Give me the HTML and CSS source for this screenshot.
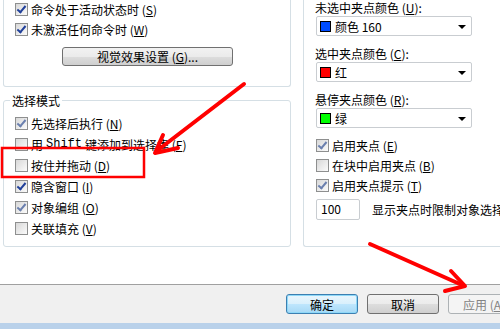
FILE: index.html
```html
<!DOCTYPE html>
<html lang="zh-CN">

<head>
    <meta charset="UTF-8">
    <meta name="viewport" content="width=device-width, initial-scale=1.0">
    <title>选项 - 选择集</title>
    <link rel="stylesheet" href="styles.css">
</head>

<body>
    <div class="dialog">
        <div class="main">
            <div class="left">
                <div class="group top">
                    <div class="check on"><span class="box"></span>命令处于活动状态时 (<u>S</u>)</div>
                    <div class="check on"><span class="box"></span>未激活任何命令时 (<u>W</u>)</div>
                    <button class="btn visual">视觉效果设置 (<u>G</u>)...</button>
                </div>

                <fieldset class="group mode">
                    <legend>选择模式</legend>
                    <div class="rows">
                        <div class="check on dim"><span class="box"></span>先选择后执行 (<u>N</u>)</div>
                        <div class="check"><span class="box"></span>用 <span class="mono">Shift</span> 键添加到选择集 (<u>F</u>)</div>
                        <div class="check"><span class="box"></span>按住并拖动 (<u>D</u>)</div>
                        <div class="check on"><span class="box"></span>隐含窗口 (<u>I</u>)</div>
                        <div class="check on dim"><span class="box"></span>对象编组 (<u>O</u>)</div>
                        <div class="check"><span class="box"></span>关联填充 (<u>V</u>)</div>
                    </div>
                </fieldset>
            </div>

            <div class="right">
                <div class="group grips">
                    <div class="label">未选中夹点颜色 (<u>U</u>):</div>
                    <div class="select"><span class="swatch blue"></span>颜色 160<span class="caret"></span></div>

                    <div class="label">选中夹点颜色 (<u>C</u>):</div>
                    <div class="select"><span class="swatch red"></span>红<span class="caret"></span></div>

                    <div class="label">悬停夹点颜色 (<u>R</u>):</div>
                    <div class="select"><span class="swatch green"></span>绿<span class="caret"></span></div>

                    <div class="check on dim first"><span class="box"></span>启用夹点 (<u>E</u>)</div>
                    <div class="check"><span class="box"></span>在块中启用夹点 (<u>B</u>)</div>
                    <div class="check on dim"><span class="box"></span>启用夹点提示 (<u>T</u>)</div>

                    <div class="limit">
                        <div class="num">100</div>
                        <span>显示夹点时限制对象选择</span>
                    </div>
                </div>
            </div>
        </div>

        <div class="footer">
            <button class="btn ok">确定</button>
            <button class="btn">取消</button>
            <button class="btn" disabled>应用 (<u>A</u>)</button>
        </div>
        <div class="band"></div>

        <!-- 红色标注 -->
        <svg class="marks" width="500" height="329" viewBox="0 0 500 329">
            <rect x="2" y="148" width="142" height="29" fill="none" stroke="#f00" stroke-width="2.5" />
            <g fill="none" stroke="#f00" stroke-width="4" stroke-linecap="round" stroke-linejoin="round">
                <path d="M244 84 L158 150" />
                <path d="M163 135 L155 153 L178 148" />
                <path d="M370 244 L462 285" />
                <path d="M451 271 L465 286 L445 291" />
            </g>
        </svg>
    </div>
</body>

</html>
```

FILE: styles.css
```css
body {
    margin: 0;
    background-color: #fff;
    color: #000;
    font-family: "Noto Sans CJK SC", "DejaVu Sans", sans-serif;
    font-size: 12px;
}

.dialog {
    position: relative;
    width: 500px;
    height: 329px;
    overflow: hidden;
}

.main {
    display: flex;
    height: 284px;
    padding-left: 3px;
}

.left {
    flex: none;
    width: 288px;
}

.group {
    box-sizing: border-box;
    border: 1px solid #d5dfe5;
}

.top {
    height: 87px;
    padding: 3px 0 0 11px;
    border-top: none;
    border-radius: 0 0 3px 3px;
}

.check {
    display: flex;
    align-items: center;
    height: 13px;
    line-height: 13px;
    margin-bottom: 7px;
    white-space: nowrap;
}

.box {
    display: flex;
    justify-content: center;
    flex: none;
    box-sizing: border-box;
    width: 13px;
    height: 13px;
    margin-right: 3px;
    border: 1px solid #8e8f8f;
    background: linear-gradient(135deg, #d8d8d8, #fbfbfb);
}

.check.on .box::after {
    content: "";
    width: 3px;
    height: 7px;
    margin-top: 0;
    border: solid #21409a;
    border-width: 0 2px 2px 0;
    transform: rotate(40deg);
}

.check.dim .box::after {
    border-color: #6a7fae;
}

.mono {
    font-family: "Liberation Mono", monospace;
    margin: 0 3px;
}

.btn {
    box-sizing: border-box;
    height: 19px;
    padding: 0;
    border: 1px solid #707070;
    border-radius: 3px;
    background: linear-gradient(#f2f2f2 0%, #ebebeb 50%, #dddddd 51%, #cfcfcf 100%);
    color: #000;
    font: inherit;
    line-height: 15px;
}

.visual {
    display: block;
    width: 171px;
    margin: 11px 0 0 47px;
}

.mode {
    height: 153px;
    margin: 7px 0 0;
    padding: 0;
    min-width: 0;
    border-radius: 3px;
}

.mode legend {
    margin-left: 6px;
    padding: 0 2px;
    line-height: 13px;
}

.mode .rows {
    padding: 10px 0 0 11px;
}

.mode .check {
    margin-bottom: 8px;
}

.right {
    flex: none;
    width: 230px;
    margin-left: 12px;
}

.grips {
    height: 247px;
    padding: 1px 0 0 11px;
    border-top: none;
    border-right: none;
    border-radius: 0 0 0 3px;
}

.label {
    height: 13px;
    line-height: 13px;
    margin-bottom: 2px;
    white-space: nowrap;
}

.select {
    display: flex;
    align-items: center;
    box-sizing: border-box;
    width: 156px;
    height: 20px;
    margin: 0 0 11px 1px;
    padding-left: 3px;
    border: 1px solid #c9cdd1;
    border-radius: 2px;
}

.swatch {
    box-sizing: border-box;
    width: 11px;
    height: 11px;
    margin-right: 4px;
    border: 1px solid #000;
}

.blue {
    background-color: #004cff;
}

.red {
    background-color: #f00;
}

.green {
    background-color: #0f0;
}

.caret {
    width: 0;
    height: 0;
    margin: 1px 5px 0 auto;
    border-left: 4px solid transparent;
    border-right: 4px solid transparent;
    border-top: 4px solid #000;
}

.grips .check {
    margin-left: 1px;
}

.grips .check.first {
    margin-top: 1px;
}

.limit {
    display: flex;
    align-items: center;
    margin: 1px 0 0 1px;
    white-space: nowrap;
}

.num {
    box-sizing: border-box;
    width: 44px;
    height: 21px;
    padding-left: 4px;
    line-height: 17px;
    border: 1px solid #c9cdd1;
    border-radius: 2px;
}

.limit span {
    margin-left: 12px;
}

.footer {
    display: flex;
    gap: 9px;
    box-sizing: border-box;
    height: 39px;
    padding: 9px 0 0 286px;
    border-top: 1px solid #a0a0a0;
    background-color: #f0f0f0;
}

.footer .btn {
    flex: none;
    width: 72px;
    height: 20px;
}

.footer .ok {
    border-color: #3c7fb1;
    background: linear-gradient(#eaf6fd 0%, #d9f0fc 50%, #bee6fd 51%, #a7d9f5 100%);
    box-shadow: inset 0 0 0 1px #8ed8f8;
}

.footer .btn:disabled {
    border-color: #adb2b5;
    background: #f4f4f4;
    color: #838383;
}

.band {
    height: 6px;
    background-color: #b9d1ea;
}

.marks {
    position: absolute;
    top: 0;
    left: 0;
    pointer-events: none;
}
```
